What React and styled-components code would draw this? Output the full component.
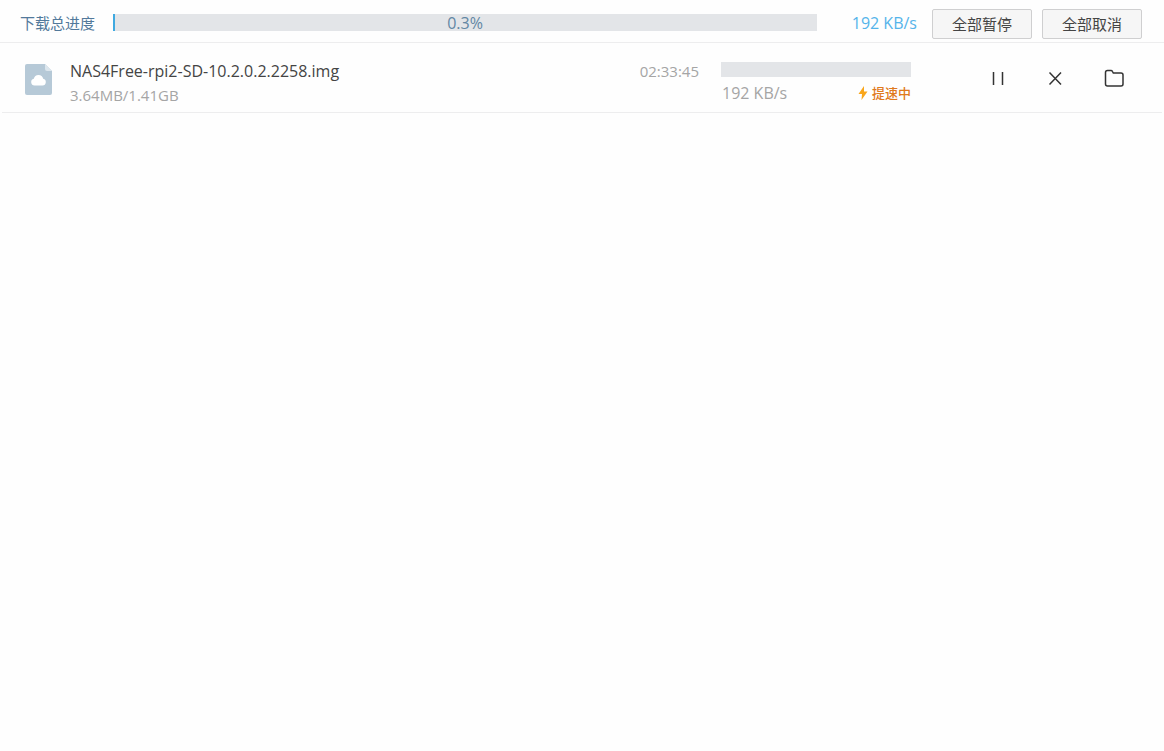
import React from "react";
import styled, { createGlobalStyle } from "styled-components";

const GlobalStyle = createGlobalStyle`
  * { box-sizing: border-box; }
  body {
    margin: 0;
    background: #fefefe;
    color: #444;
    font-family: "Open Sans", "Noto Sans CJK SC", sans-serif;
    font-size: 15px;
    line-height: 20px;
  }
  button { font: inherit; color: inherit; cursor: pointer; }
`;

const Header = styled.header`
  display: flex;
  align-items: flex-start;
  height: 43px;
  padding: 9px 22px 0 20px;
  border-bottom: 1px solid #ededee;
`;

const Title = styled.h1`
  margin: 4px 18px 0 0;
  color: #52799b;
  font-size: 15px;
  font-weight: 400;
  line-height: 20px;
  white-space: nowrap;
`;

const Track = styled.div`
  position: relative;
  display: flex;
  align-items: center;
  justify-content: center;
  height: 15px;
  color: #6287a4;
  background: #e3e5e8;
`;

const TotalTrack = styled(Track)`
  flex: 1;
  height: 17px;
  margin-top: 5px;
`;

const Fill = styled.div`
  position: absolute;
  left: 0;
  top: 0;
  bottom: 0;
  background: #3fa9e0;
`;

const Percent = styled.span`
  position: relative;
  font-size: 16px;
`;

const TotalSpeed = styled.span`
  width: 100px;
  margin: 4px 15px 0 0;
  color: #55b4ea;
  font-size: 16px;
  text-align: right;
  white-space: nowrap;
`;

const Button = styled.button`
  width: 100px;
  height: 30px;
  padding: 0;
  color: #444;
  background: #f6f6f6;
  border: 1px solid #cfcfd0;
  border-radius: 2px;
  & + & { margin-left: 10px; }
`;

const List = styled.ul`
  margin: 0;
  padding: 0 2px;
  list-style: none;
`;

const Row = styled.li`
  display: flex;
  align-items: flex-start;
  height: 70px;
  padding: 16px 36px 0 23px;
  border-bottom: 1px solid #ededee;
`;

const FileIcon = styled.svg`
  flex: none;
  width: 27px;
  height: 31px;
  margin: 5px 18px 0 0;
`;

const FileInfo = styled.div`
  flex: 1;
  min-width: 0;
`;

const FileName = styled.div`
  overflow: hidden;
  text-overflow: ellipsis;
  white-space: nowrap;
  font-size: 16px;
  line-height: 24px;
`;

const Muted = styled.div`
  color: #a5a5a5;
  font-size: ${(p) => (p.$large ? "16px" : "15px")};
  line-height: 24px;
`;

const Transfer = styled.div`
  width: 190px;
  margin: 3px 0 0 22px;
`;

const Status = styled.div`
  display: flex;
  justify-content: space-between;
  align-items: center;
  padding: 4px 0 0 1px;
`;

const Boost = styled.span`
  display: flex;
  align-items: center;
  gap: 4px;
  color: #e07a1c;
  font-size: 13px;
  font-weight: 500;
`;

const Actions = styled.div`
  display: flex;
  gap: 34px;
  margin: 7px 0 0 75px;
`;

const IconButton = styled.button`
  display: flex;
  width: 24px;
  height: 24px;
  padding: 0;
  background: none;
  border: 0;
`;

const actions = [
  { label: "暂停", path: "M7.500 6v13M16.500 6v13" },
  { label: "取消", path: "M5.500 6.500L17 18.500M17 6.500L5.500 18.500" },
  {
    label: "打开文件夹",
    path: "M3.500 6.500q0-2 2-2h3.500q1 0 1.500 1l.8 1.500h7.700q2 0 2 2v9q0 2-2 2h-13.500q-2 0-2-2z",
  },
];

export default function App() {
  return (
    <>
      <GlobalStyle />
      <Header>
        <Title>下载总进度</Title>
        <TotalTrack role="progressbar" aria-label="下载总进度" aria-valuenow={0.3}>
          <Fill style={{ width: "0.3%" }} />
          <Percent>0.3%</Percent>
        </TotalTrack>
        <TotalSpeed>192 KB/s</TotalSpeed>
        <Button type="button">全部暂停</Button>
        <Button type="button">全部取消</Button>
      </Header>
      <List>
        <Row>
          <FileIcon viewBox="0 0 27 31" aria-hidden="true">
            <path d="M2 0H20L27 7V29Q27 31 25 31H2Q0 31 0 29V2Q0 0 2 0Z" fill="#b6c9d7" />
            <path d="M20 0L27 7H22Q20 7 20 5Z" fill="#dce6ed" />
            <path
              d="M9.500 21.500A3.400 3.400 0 0 1 8.800 14.800A4.800 4.800 0 0 1 18.200 14.800A3.400 3.400 0 0 1 17.500 21.500Z"
              fill="#fff"
            />
          </FileIcon>
          <FileInfo>
            <FileName>NAS4Free-rpi2-SD-10.2.0.2.2258.img</FileName>
            <Muted>3.64MB/1.41GB</Muted>
          </FileInfo>
          <Muted>02:33:45</Muted>
          <Transfer>
            <Track role="progressbar" aria-label="下载进度" aria-valuenow={0.3} />
            <Status>
              <Muted $large>192 KB/s</Muted>
              <Boost>
                <svg width="10" height="14" viewBox="0 0 10 14" aria-hidden="true">
                  <path d="M6 0L0.500 8H4L3.500 14L9.500 5.500H6Z" fill="#f9a61a" />
                </svg>
                提速中
              </Boost>
            </Status>
          </Transfer>
          <Actions>
            {actions.map((a) => (
              <IconButton key={a.label} type="button" aria-label={a.label}>
                <svg width="24" height="24" viewBox="0 0 24 24" fill="none" stroke="#333" strokeWidth="1.500">
                  <path d={a.path} />
                </svg>
              </IconButton>
            ))}
          </Actions>
        </Row>
      </List>
    </>
  );
}
